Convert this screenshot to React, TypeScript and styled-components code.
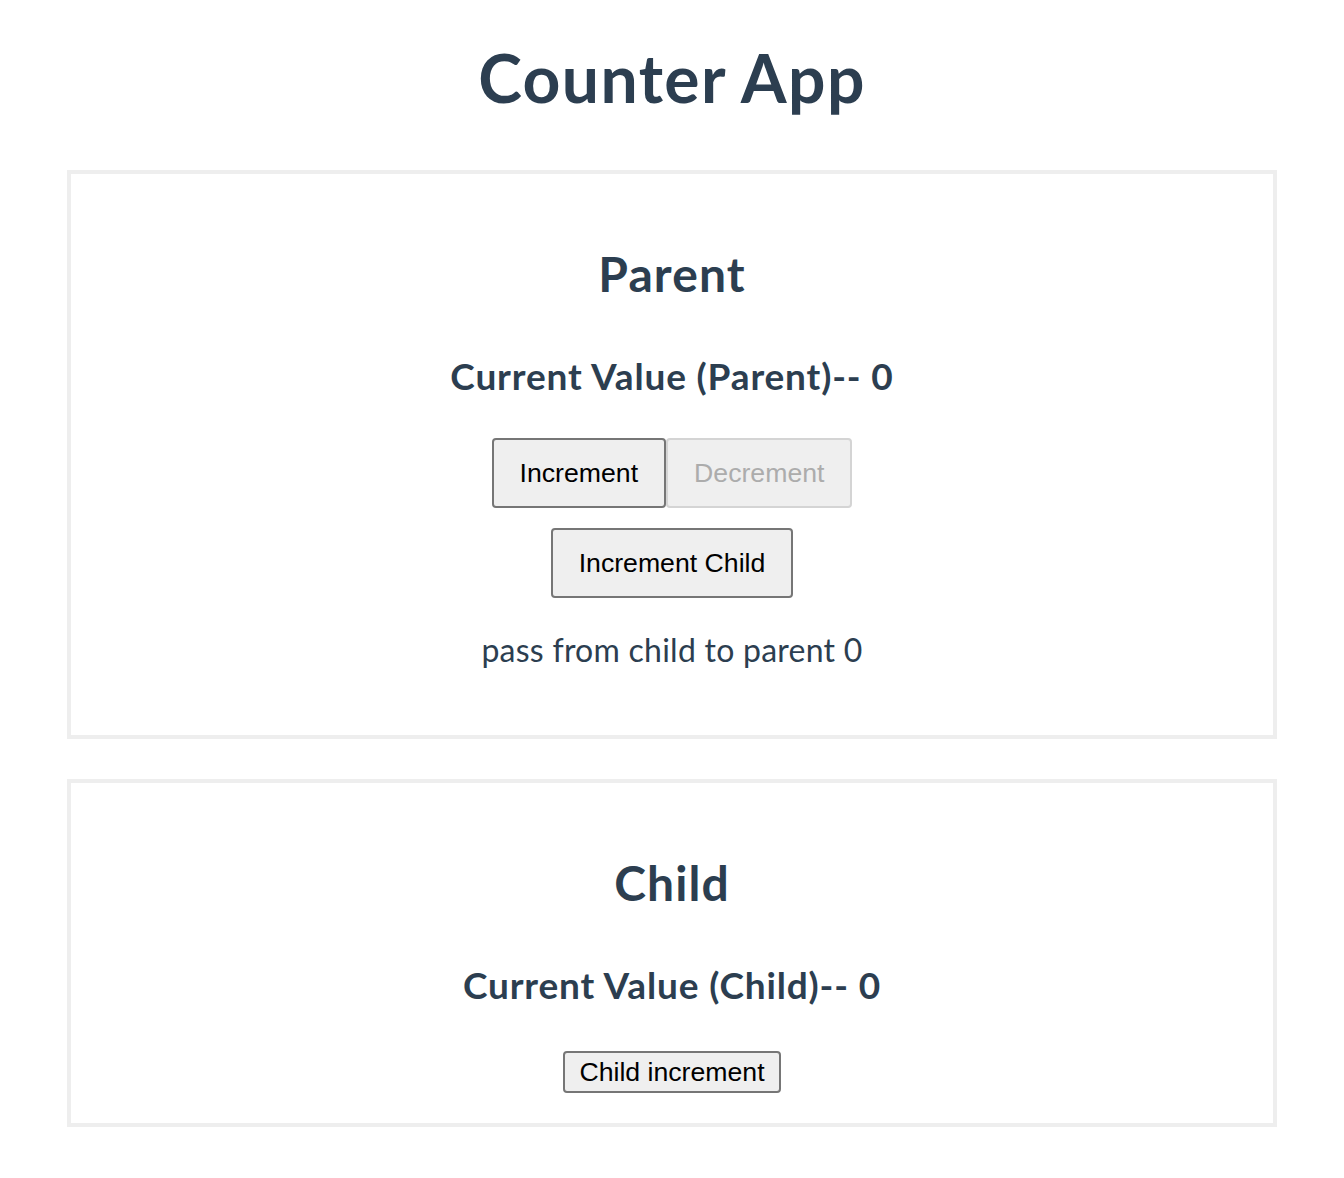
import React, { useState } from 'react';
import styled, { createGlobalStyle } from 'styled-components';

const GlobalStyle = createGlobalStyle`
	body {
		margin: 0;
		background: #fff;
		font-family: Lato, 'Noto Sans', sans-serif;
		color: #2c3e50;
		-webkit-font-smoothing: antialiased;
	}
`;

const Page = styled.div`
	display: flex;
	flex-direction: column;
	align-items: center;
	text-align: center;
	padding-bottom: 50px;
`;

const Title = styled.h1`
	font-size: 66px;
	line-height: 66px;
	font-weight: 700;
	letter-spacing: 1.4px;
	margin: 45px 0 59px 0;
`;

const Card = styled.section<{ bottom: number }>`
	box-sizing: border-box;
	width: 90%;
	border: 4px solid #eee;
	padding: 76px 20px ${(p) => p.bottom}px 20px;
	margin-bottom: 40px;
	display: flex;
	flex-direction: column;
	align-items: center;
`;

const Heading = styled.h2`
	font-size: 48px;
	line-height: 48px;
	font-weight: 700;
	letter-spacing: 1.1px;
	margin: 0 0 59px 0;
`;

const Value = styled.h3<{ gap: number }>`
	font-size: 37px;
	line-height: 37px;
	font-weight: 700;
	letter-spacing: 0.85px;
	margin: 0 0 ${(p) => p.gap}px 0;
`;

const ButtonRow = styled.div`
	display: flex;
	justify-content: center;
	margin-bottom: 20px;
`;

const Button = styled.button<{ big?: boolean }>`
	box-sizing: border-box;
	font-family: 'Liberation Sans', Arial, sans-serif;
	font-size: 26.67px;
	color: #000;
	background: #efefef;
	border: 2px solid #767676;
	border-radius: 4px;
	height: ${(p) => (p.big ? 70 : 42)}px;
	padding: 0 ${(p) => (p.big ? 26 : 14)}px;
	margin: 0;
	cursor: pointer;
	&:disabled {
		color: #acacac;
		border-color: #d4d4d4;
		cursor: default;
	}
`;

const PassText = styled.p`
	font-size: 32px;
	line-height: 32px;
	font-weight: 400;
	letter-spacing: 0.25px;
	margin: 16px 0 0 0;
`;

const Child = ({ count, onIncrement }: { count: number; onIncrement: () => void }) => (
	<Card bottom={30}>
		<Heading>Child</Heading>
		<Value gap={48}>Current Value (Child)-- {count}</Value>
		<Button onClick={onIncrement}>Child increment</Button>
	</Card>
);

const App = () => {
	const [parent, setParent] = useState(0);
	const [child, setChild] = useState(0);

	return (
		<Page>
			<GlobalStyle />
			<Title>Counter App</Title>
			<Card bottom={69}>
				<Heading>Parent</Heading>
				<Value gap={44}>Current Value (Parent)-- {parent}</Value>
				<ButtonRow>
					<Button big onClick={() => setParent(parent + 1)}>
						Increment
					</Button>
					<Button big disabled={parent === 0} onClick={() => setParent(parent - 1)}>
						Decrement
					</Button>
				</ButtonRow>
				<ButtonRow>
					<Button big onClick={() => setChild(child + 1)}>
						Increment Child
					</Button>
				</ButtonRow>
				<PassText>pass from child to parent {child}</PassText>
			</Card>
			<Child count={child} onIncrement={() => setChild(child + 1)} />
		</Page>
	);
};

export default App;
